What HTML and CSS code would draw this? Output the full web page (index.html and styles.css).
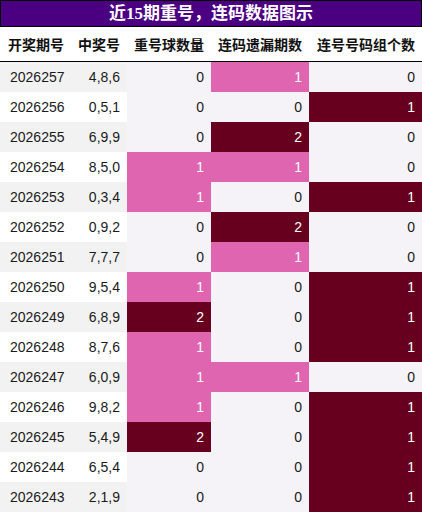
FILE: index.html
```html
<!DOCTYPE html>
<html lang="zh-CN">
<head>
    <meta charset="UTF-8">
    <meta name="viewport" content="width=device-width, initial-scale=1.0">
    <title>近15期重号，连码数据图示</title>
    <link rel="stylesheet" href="styles.css">
</head>
<body>
    <div class="title">近15期重号，连码数据图示</div>

    <table class="chart">
        <colgroup>
            <col class="c-issue">
            <col class="c-nums">
            <col class="c-repeat">
            <col class="c-miss">
            <col class="c-group">
        </colgroup>
        <thead>
            <tr>
                <th class="left">开奖期号</th>
                <th>中奖号</th>
                <th>重号球数量</th>
                <th>连码遗漏期数</th>
                <th>连号号码组个数</th>
            </tr>
        </thead>
        <tbody id="rows"></tbody>
    </table>

    <script>
        const data = [
            ['2026257', '4,8,6', 0, 1, 0],
            ['2026256', '0,5,1', 0, 0, 1],
            ['2026255', '6,9,9', 0, 2, 0],
            ['2026254', '8,5,0', 1, 1, 0],
            ['2026253', '0,3,4', 1, 0, 1],
            ['2026252', '0,9,2', 0, 2, 0],
            ['2026251', '7,7,7', 0, 1, 0],
            ['2026250', '9,5,4', 1, 0, 1],
            ['2026249', '6,8,9', 2, 0, 1],
            ['2026248', '8,7,6', 1, 0, 1],
            ['2026247', '6,0,9', 1, 1, 0],
            ['2026246', '9,8,2', 1, 0, 1],
            ['2026245', '5,4,9', 2, 0, 1],
            ['2026244', '6,5,4', 0, 0, 1],
            ['2026243', '2,1,9', 0, 0, 1]
        ];

        // 每列按本列最大值着色
        const max = [2, 3, 4].map(i => Math.max(...data.map(r => r[i])));

        function level(value, top) {
            if (value === 0) return 'lv0';
            return value >= top ? 'lv2' : 'lv1';
        }

        let html = '';
        data.forEach(row => {
            html += `
                <tr>
                    <td class="left plain">${row[0]}</td>
                    <td class="plain">${row[1]}</td>
                    <td class="${level(row[2], max[0])}">${row[2]}</td>
                    <td class="${level(row[3], max[1])}">${row[3]}</td>
                    <td class="${level(row[4], max[2])}">${row[4]}</td>
                </tr>
            `;
        });
        document.getElementById('rows').innerHTML = html;
    </script>
</body>
</html>
```

FILE: styles.css
```css
body {
    margin: 0;
    font-family: "Liberation Sans", Arial, "Noto Sans CJK SC", sans-serif;
    background-color: #ffffff;
    color: #1a1a1a;
}
.title {
    height: 25px;
    line-height: 25px;
    border: 1px solid #000;
    background-color: #4b0082;
    color: #ffffff;
    text-align: center;
    font-family: "Liberation Serif", "Noto Sans CJK SC", serif;
    font-size: 17px;
    font-weight: bold;
}
.chart {
    width: 422px;
    border-collapse: collapse;
    table-layout: fixed;
}
.c-issue { width: 71px; }
.c-nums { width: 56px; }
.c-repeat { width: 84px; }
.c-miss { width: 98px; }
.c-group { width: 113px; }
.chart th {
    height: 34px;
    padding: 0 7px;
    text-align: right;
    font-family: "Noto Sans CJK SC", sans-serif;
    font-size: 14px;
    font-weight: bold;
    color: #111;
    border-bottom: 1px solid #000;
    white-space: nowrap;
}
.chart td {
    height: 30px;
    padding: 0 7px;
    text-align: right;
    font-size: 14px;
}
.chart th.left {
    text-align: left;
    padding-left: 8px;
    padding-right: 0;
}
.chart td.left {
    text-align: left;
    padding-left: 10px;
    padding-right: 0;
}
.chart tr:nth-child(odd) .plain {
    background-color: #f2f2f2;
}
.chart tr:nth-child(even) .plain {
    background-color: #ffffff;
}
.lv0 {
    background-color: #f5f3f8;
}
.lv1 {
    background-color: #df65b0;
    color: #ffffff;
}
.lv2 {
    background-color: #67001f;
    color: #ffffff;
}
```
